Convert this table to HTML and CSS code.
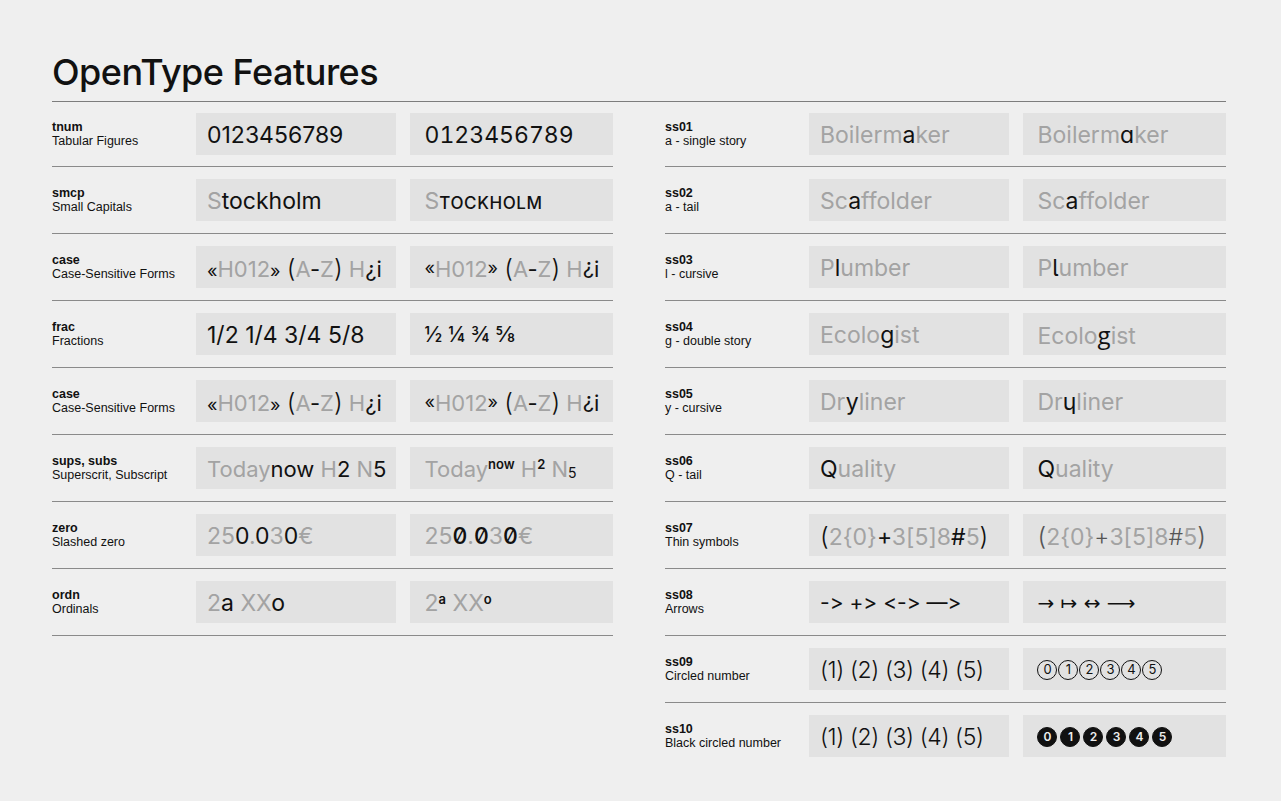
FILE: index.html
```html
<!DOCTYPE html>
<html lang="en">
<head>
<meta charset="utf-8">
<title>OpenType Features</title>
<link rel="stylesheet" href="styles.css">
</head>
<body>
<main class="page">
  <h1 class="title">OpenType Features</h1>
  <div class="cols">
    <section class="col">
      <div class="row">
        <div class="label"><b>tnum</b><span>Tabular Figures</span></div>
        <div class="sample">0123456789</div>
        <div class="sample alt tnum">0123456789</div>
      </div>
      <div class="row">
        <div class="label"><b>smcp</b><span>Small Capitals</span></div>
        <div class="sample"><i class="g">S</i>tockholm</div>
        <div class="sample alt"><i class="g">S</i><span class="sc">tockholm</span></div>
      </div>
      <div class="row">
        <div class="label"><b>case</b><span>Case-Sensitive Forms</span></div>
        <div class="sample small"><span class="q">«</span><i class="g">H012</i><span class="q">»</span> <span class="par">(</span><i class="g">A</i>-<i class="g">Z</i><span class="par">)</span> <i class="g">H</i>¿i</div>
        <div class="sample alt small"><span class="q up">«</span><i class="g">H012</i><span class="q up">»</span> <span class="par">(</span><i class="g">A</i>-<i class="g">Z</i><span class="par">)</span> <i class="g">H</i><span class="up">¿</span>i</div>
      </div>
      <div class="row">
        <div class="label"><b>frac</b><span>Fractions</span></div>
        <div class="sample">1/2 1/4 3/4 5/8</div>
        <div class="sample alt frac">½ ¼ ¾ ⅝</div>
      </div>
      <div class="row">
        <div class="label"><b>case</b><span>Case-Sensitive Forms</span></div>
        <div class="sample small"><span class="q">«</span><i class="g">H012</i><span class="q">»</span> <span class="par">(</span><i class="g">A</i>-<i class="g">Z</i><span class="par">)</span> <i class="g">H</i>¿i</div>
        <div class="sample alt small"><span class="q up">«</span><i class="g">H012</i><span class="q up">»</span> <span class="par">(</span><i class="g">A</i>-<i class="g">Z</i><span class="par">)</span> <i class="g">H</i><span class="up">¿</span>i</div>
      </div>
      <div class="row">
        <div class="label"><b>sups, subs</b><span>Superscrit, Subscript</span></div>
        <div class="sample small"><i class="g">Today</i>now <i class="g">H</i>2 <i class="g">N</i>5</div>
        <div class="sample alt small"><i class="g">Today</i><span class="sp">now</span> <i class="g">H</i><span class="sp">2</span> <i class="g">N</i><span class="sb">5</span></div>
      </div>
      <div class="row">
        <div class="label"><b>zero</b><span>Slashed zero</span></div>
        <div class="sample"><i class="g">25</i>0<i class="g">.</i>0<i class="g">3</i>0<i class="g">€</i></div>
        <div class="sample alt"><i class="g">25</i><span class="sz">0</span><i class="g">.</i><span class="sz">0</span><i class="g">3</i><span class="sz">0</span><i class="g">€</i></div>
      </div>
      <div class="row">
        <div class="label"><b>ordn</b><span>Ordinals</span></div>
        <div class="sample"><i class="g">2</i>a <i class="g">XX</i>o</div>
        <div class="sample alt"><i class="g">2</i><span class="ord">a</span> <i class="g">XX</i><span class="ord">o</span></div>
      </div>
    </section>

    <section class="col">
      <div class="row">
        <div class="label"><b>ss01</b><span>a - single story</span></div>
        <div class="sample"><i class="g">Boilerm</i>a<i class="g">ker</i></div>
        <div class="sample alt"><i class="g">Boilerm</i><span class="ss01">a</span><i class="g">ker</i></div>
      </div>
      <div class="row">
        <div class="label"><b>ss02</b><span>a - tail</span></div>
        <div class="sample"><i class="g">Sc</i>a<i class="g">ffolder</i></div>
        <div class="sample alt"><i class="g">Sc</i>a<i class="g">ffolder</i></div>
      </div>
      <div class="row">
        <div class="label"><b>ss03</b><span>l - cursive</span></div>
        <div class="sample"><i class="g">P</i>l<i class="g">umber</i></div>
        <div class="sample alt"><i class="g">P</i><span class="ss03">l</span><i class="g">umber</i></div>
      </div>
      <div class="row">
        <div class="label"><b>ss04</b><span>g - double story</span></div>
        <div class="sample"><i class="g">Ecolo</i>g<i class="g">ist</i></div>
        <div class="sample alt"><i class="g">Ecolo</i><span class="ss04">g</span><i class="g">ist</i></div>
      </div>
      <div class="row">
        <div class="label"><b>ss05</b><span>y - cursive</span></div>
        <div class="sample"><i class="g">Dr</i>y<i class="g">liner</i></div>
        <div class="sample alt"><i class="g">Dr</i><span class="ss05">ɥ</span><i class="g">liner</i></div>
      </div>
      <div class="row">
        <div class="label"><b>ss06</b><span>Q - tail</span></div>
        <div class="sample">Q<i class="g">uality</i></div>
        <div class="sample alt">Q<i class="g">uality</i></div>
      </div>
      <div class="row">
        <div class="label"><b>ss07</b><span>Thin symbols</span></div>
        <div class="sample"><span class="par">(</span><i class="g">2{0}</i>+<i class="g">3[5]8</i>#<i class="g">5</i><span class="par">)</span></div>
        <div class="sample alt"><span class="thin par">(</span><i class="g">2{0}</i><span class="thin">+</span><i class="g">3[5]8</i><span class="thin">#</span><i class="g">5</i><span class="thin par">)</span></div>
      </div>
      <div class="row">
        <div class="label"><b>ss08</b><span>Arrows</span></div>
        <div class="sample arrows">-&gt; +&gt; &lt;-&gt; —&gt;</div>
        <div class="sample alt arrows2">→ ↦ ↔ ⟶</div>
      </div>
      <div class="row">
        <div class="label"><b>ss09</b><span>Circled number</span></div>
        <div class="sample paren">(1) (2) (3) (4) (5)</div>
        <div class="sample alt"><span class="circles"><span class="circ">0</span><span class="circ">1</span><span class="circ">2</span><span class="circ">3</span><span class="circ">4</span><span class="circ">5</span></span></div>
      </div>
      <div class="row last">
        <div class="label"><b>ss10</b><span>Black circled number</span></div>
        <div class="sample paren">(1) (2) (3) (4) (5)</div>
        <div class="sample alt"><span class="circles black"><span class="circ">0</span><span class="circ">1</span><span class="circ">2</span><span class="circ">3</span><span class="circ">4</span><span class="circ">5</span></span></div>
      </div>
    </section>
  </div>
</main>
</body>
</html>
```

FILE: styles.css
```css
* { box-sizing: border-box; }

html, body {
  margin: 0;
  padding: 0;
  background: #efefef;
}

body {
  font-family: "Inter", "Liberation Sans", sans-serif;
  color: #111;
}

.page {
  padding: 50px 55px 0 52px;
}

.title {
  margin: 0;
  font-family: "Inter", sans-serif;
  font-size: 36px;
  font-weight: 500;
  letter-spacing: -0.5px;
  line-height: 44px;
  padding-bottom: 7px;
  border-bottom: 1px solid #7d7d7d;
}

.cols {
  display: grid;
  grid-template-columns: minmax(0, 1fr) minmax(0, 1fr);
  column-gap: 52px;
}

.row {
  display: grid;
  grid-template-columns: 130px minmax(0, 100fr) minmax(0, 101fr);
  column-gap: 14px;
  align-items: center;
  padding: 12px 0;
  border-bottom: 1px solid #8a8a8a;
}

.row:first-child {
  padding-top: 11px;
  padding-bottom: 11px;
}

.row.last {
  border-bottom: none;
}

.label {
  display: flex;
  flex-direction: column;
  font-family: "Liberation Sans", Arial, sans-serif;
  font-size: 12.5px;
  line-height: 14px;
}

.label b {
  font-weight: 700;
}

.sample {
  height: 42px;
  background: #e2e2e2;
  padding-left: 11px;
  font-size: 23px;
  line-height: 44px;
  font-weight: 400;
  white-space: nowrap;
  overflow: hidden;
  color: #111;
  font-feature-settings: "calt" 0, "liga" 0;
}

.sample.small {
  font-size: 22px;
}

.sample.alt {
  padding-left: 14px;
}

.sample i {
  font-style: normal;
}

.g {
  color: #a3a3a3;
}

.tnum {
  font-feature-settings: "tnum" 1, "calt" 0;
}

.sc {
  text-transform: uppercase;
  font-size: 17px;
  letter-spacing: 0.6px;
  font-weight: 500;
}

.q {
  font-size: 18px;
}

.up {
  position: relative;
  top: -3px;
}

.par {
  font-size: 25px;
  font-weight: 300;
}

.frac {
  font-size: 21px;
}

.sp {
  font-size: 13px;
  font-weight: 600;
  position: relative;
  top: -8px;
}

.sb {
  font-size: 14px;
  position: relative;
  top: 1px;
}

.sz {
  font-feature-settings: "zero" 1;
  font-weight: 500;
}

.ord {
  font-size: 13px;
  font-weight: 600;
  position: relative;
  top: -7px;
}

.ss01 {
  font-feature-settings: "cv11" 1;
}

.ss03 {
  font-feature-settings: "cv05" 1;
}

.ss04 {
  font-family: "Open Sans", sans-serif;
  font-size: 24px;
}

.thin {
  font-weight: 300;
  color: #555;
}

.arrows {
  font-size: 21px;
}

.arrows2 {
  font-size: 20px;
  font-family: "DejaVu Sans", sans-serif;
}

.paren {
  font-size: 23px;
  font-weight: 300;
  letter-spacing: -0.4px;
}

.circles {
  display: inline-flex;
  gap: 1px;
  vertical-align: middle;
  position: relative;
  top: -2px;
}

.circ {
  width: 20px;
  height: 20px;
  border: 1px solid #111;
  border-radius: 50%;
  display: inline-flex;
  align-items: center;
  justify-content: center;
  font-size: 13px;
  line-height: 1;
  letter-spacing: 0;
  color: #111;
}

.circles.black {
  gap: 3px;
}

.circles.black .circ {
  background: #111;
  color: #eee;
  font-weight: 600;
  font-size: 12px;
}
```
